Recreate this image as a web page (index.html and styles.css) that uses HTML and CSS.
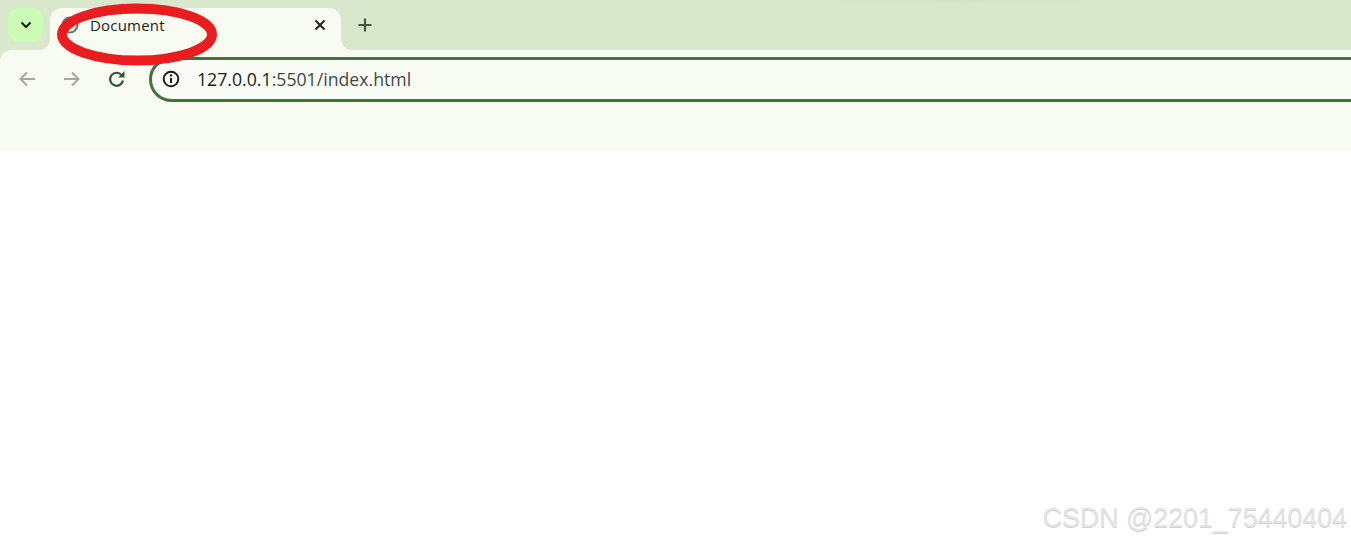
FILE: index.html
```html
<!DOCTYPE html>
<html lang="en">
<head>
  <meta charset="UTF-8">
  <meta name="viewport" content="width=device-width, initial-scale=1.0">
  <title>Document</title>
  <link rel="stylesheet" href="styles.css">
</head>
<body>
  <div class="tabstrip">
    <button class="tab-search" aria-label="Search tabs">
      <svg width="12" height="8" viewBox="0 0 12 8"><path d="M1.5 1.5 6 6l4.5-4.5" fill="none" stroke="#10200f" stroke-width="2"/></svg>
    </button>
    <div class="tab">
      <svg class="favicon" width="18" height="18" viewBox="0 0 18 18"><circle cx="9" cy="9" r="7.5" fill="none" stroke="#6d7370" stroke-width="2"/></svg>
      <span class="tab-title">Document</span>
      <svg class="tab-close" width="12" height="12" viewBox="0 0 12 12"><path d="M1.5 1.5l9 9M10.5 1.5l-9 9" fill="none" stroke="#1d251c" stroke-width="2"/></svg>
    </div>
    <svg class="new-tab" width="14" height="14" viewBox="0 0 14 14"><path d="M7 .5v13M.5 7h13" fill="none" stroke="#47573f" stroke-width="2.2"/></svg>
  </div>

  <div class="toolbar">
    <svg class="nav-icon" width="18" height="18" viewBox="0 0 18 18"><path d="M17 9H2.5M9 2.5 2.5 9 9 15.5" fill="none" stroke="#a3a8a0" stroke-width="2"/></svg>
    <svg class="nav-icon" width="18" height="18" viewBox="0 0 18 18"><path d="M1 9h14.5M9 2.5 15.5 9 9 15.5" fill="none" stroke="#a3a8a0" stroke-width="2"/></svg>
    <svg class="nav-icon" width="18" height="18" viewBox="0 0 18 18"><path d="M15 10.5a6.5 6.5 0 1 1-1.2-5.2" fill="none" stroke="#37503a" stroke-width="2.2"/><path d="M16.5 1v6.5H10z" fill="#37503a"/></svg>
    <div class="omnibox">
      <svg width="18" height="18" viewBox="0 0 18 18"><circle cx="9" cy="9" r="7.3" fill="none" stroke="#161c16" stroke-width="1.9"/><path d="M9 8v5" stroke="#161c16" stroke-width="2"/><circle cx="9" cy="5.4" r="1.2" fill="#161c16"/></svg>
      <span class="url"><span class="url-host">127.0.0.1</span>:5501/index.html</span>
    </div>
  </div>

  <main class="page">
    <div class="watermark">CSDN @2201_75440404</div>
  </main>

  <svg class="annotation" width="170" height="70" viewBox="0 0 170 70"><ellipse cx="80" cy="34.5" rx="75" ry="26" fill="none" stroke="#e91c1e" stroke-width="10"/></svg>
</body>
</html>
```

FILE: styles.css
```css
html, body {
  height: 100%;
}
body {
  margin: 0;
  position: relative;
  display: flex;
  flex-direction: column;
  overflow: hidden;
  background: #d9e8cd;
  font-family: 'Open Sans', 'Noto Sans', sans-serif;
}
.tabstrip {
  height: 50px;
  flex-shrink: 0;
  display: flex;
  align-items: flex-start;
  box-sizing: border-box;
  padding: 8px 0 0 8px;
  position: relative;
  background: #d9e8cd;
}
/* faint smudge along the top edge */
.tabstrip::after {
  content: "";
  position: absolute;
  top: 0;
  left: 810px;
  width: 300px;
  height: 6px;
  background: radial-gradient(ellipse at 50% 0, #d3e3c6, transparent 70%);
}
.tab-search {
  width: 35px;
  height: 34px;
  padding: 0;
  border: 0;
  border-radius: 11px;
  background: #ccfdb6;
  display: flex;
  align-items: center;
  justify-content: center;
}
.tab {
  width: 291px;
  height: 42px;
  margin-left: 7px;
  box-sizing: border-box;
  padding: 0 15px 8px 11px;
  display: flex;
  align-items: center;
  position: relative;
  border-radius: 12px 12px 0 0;
  background: #f8fbf2;
}
.tab::before,
.tab::after {
  content: "";
  position: absolute;
  bottom: 0;
  width: 12px;
  height: 12px;
}
.tab::before {
  left: -12px;
  background: radial-gradient(circle at 0 0, transparent 12px, #f8fbf2 12.5px);
}
.tab::after {
  right: -12px;
  background: radial-gradient(circle at 100% 0, transparent 12px, #f8fbf2 12.5px);
}
.tab-title {
  margin-left: 11px;
  flex: 1;
  font-size: 15px;
  letter-spacing: 0.2px;
  color: #1c211b;
}
.new-tab {
  margin: 10px 0 0 17px;
}
.toolbar {
  height: 101px;
  flex-shrink: 0;
  box-sizing: border-box;
  padding: 7px 0 0 18px;
  display: flex;
  align-items: flex-start;
  border-radius: 12px 0 0 0;
  background: #f8fbf2;
  position: relative;
}
.nav-icon {
  margin: 13px 27px 0 0;
}
.nav-icon:nth-child(3) {
  margin-right: 23px;
}
.omnibox {
  flex: 1;
  height: 45px;
  margin-right: -40px;
  box-sizing: border-box;
  padding: 0 0 1px 10px;
  display: flex;
  align-items: center;
  gap: 17px;
  border: 3px solid #47703f;
  border-radius: 23px;
  background: #f9fcf5;
}
.url {
  font-size: 17.7px;
  color: #3d4a3f;
  white-space: nowrap;
}
.url-host {
  color: #1b2119;
}
.page {
  flex: 1;
  position: relative;
  background: #fff;
}
.watermark {
  position: absolute;
  right: 4px;
  bottom: 8px;
  font-family: 'Liberation Sans', Arial, sans-serif;
  font-size: 26.8px;
  line-height: 30px;
  color: #e4e4e4;
  text-shadow: 0 1px 0 #d2d2d2;
  white-space: nowrap;
}
.annotation {
  position: absolute;
  left: 57px;
  top: 0;
}
```
